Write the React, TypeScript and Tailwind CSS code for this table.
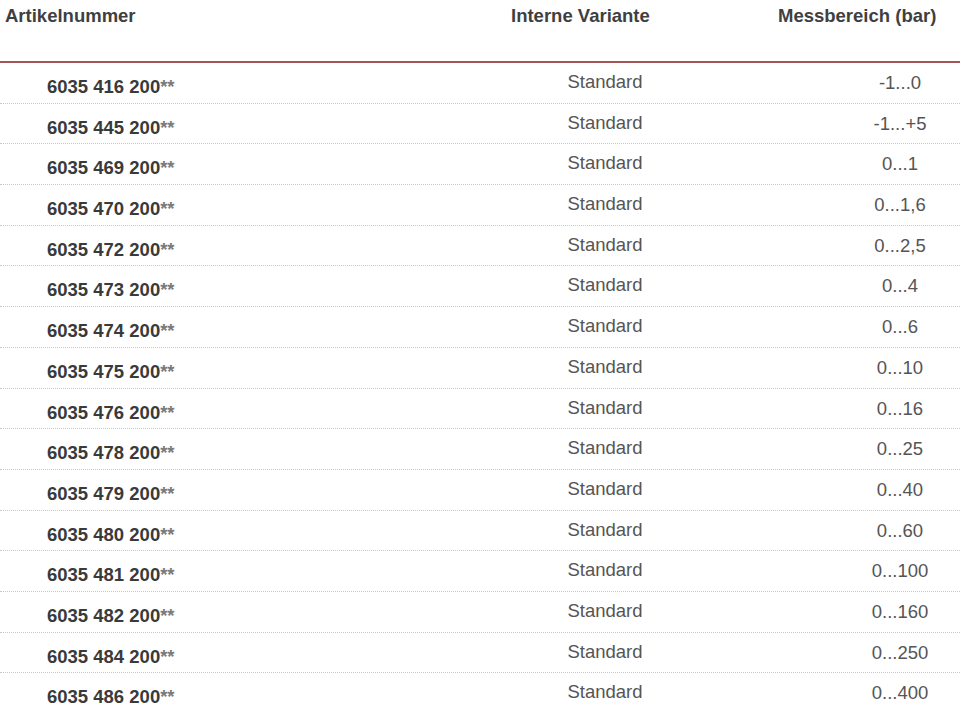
import React from "react";

const rows: [string, string][] = [
  ["6035 416 200", "-1...0"],
  ["6035 445 200", "-1...+5"],
  ["6035 469 200", "0...1"],
  ["6035 470 200", "0...1,6"],
  ["6035 472 200", "0...2,5"],
  ["6035 473 200", "0...4"],
  ["6035 474 200", "0...6"],
  ["6035 475 200", "0...10"],
  ["6035 476 200", "0...16"],
  ["6035 478 200", "0...25"],
  ["6035 479 200", "0...40"],
  ["6035 480 200", "0...60"],
  ["6035 481 200", "0...100"],
  ["6035 482 200", "0...160"],
  ["6035 484 200", "0...250"],
  ["6035 486 200", "0...400"],
];

export default function App() {
  return (
    <div
      className="w-[960px] h-[708px] overflow-hidden bg-white text-[18.5px] leading-[22px]"
      style={{ fontFamily: '"Liberation Sans", Arial, sans-serif' }}
    >
      <div className="flex h-[63px] border-b-2 border-[#a65454] font-bold text-[#3f3f3f]">
        <div className="w-[480px] pl-[5px] pt-[5px]">Artikelnummer</div>
        <div className="w-[250px] pl-[31px] pt-[5px]">Interne Variante</div>
        <div className="flex-1 pl-[48px] pt-[5px]">Messbereich (bar)</div>
      </div>
      {rows.map(([nr, range]) => (
        <div
          key={nr}
          className="flex h-[40.7px] border-b border-dotted border-[#c8c8c8]"
        >
          <div className="w-[480px] pl-[47px] pt-[13px] font-bold text-[#3a3a3a]">
            {nr}
            <span className="text-[#7a7a7a]">**</span>
          </div>
          <div className="w-[250px] pt-[8px] text-center text-[#555555]">Standard</div>
          <div className="flex-1 pl-[110px] pt-[9px] text-center text-[#555555]">{range}</div>
        </div>
      ))}
    </div>
  );
}
